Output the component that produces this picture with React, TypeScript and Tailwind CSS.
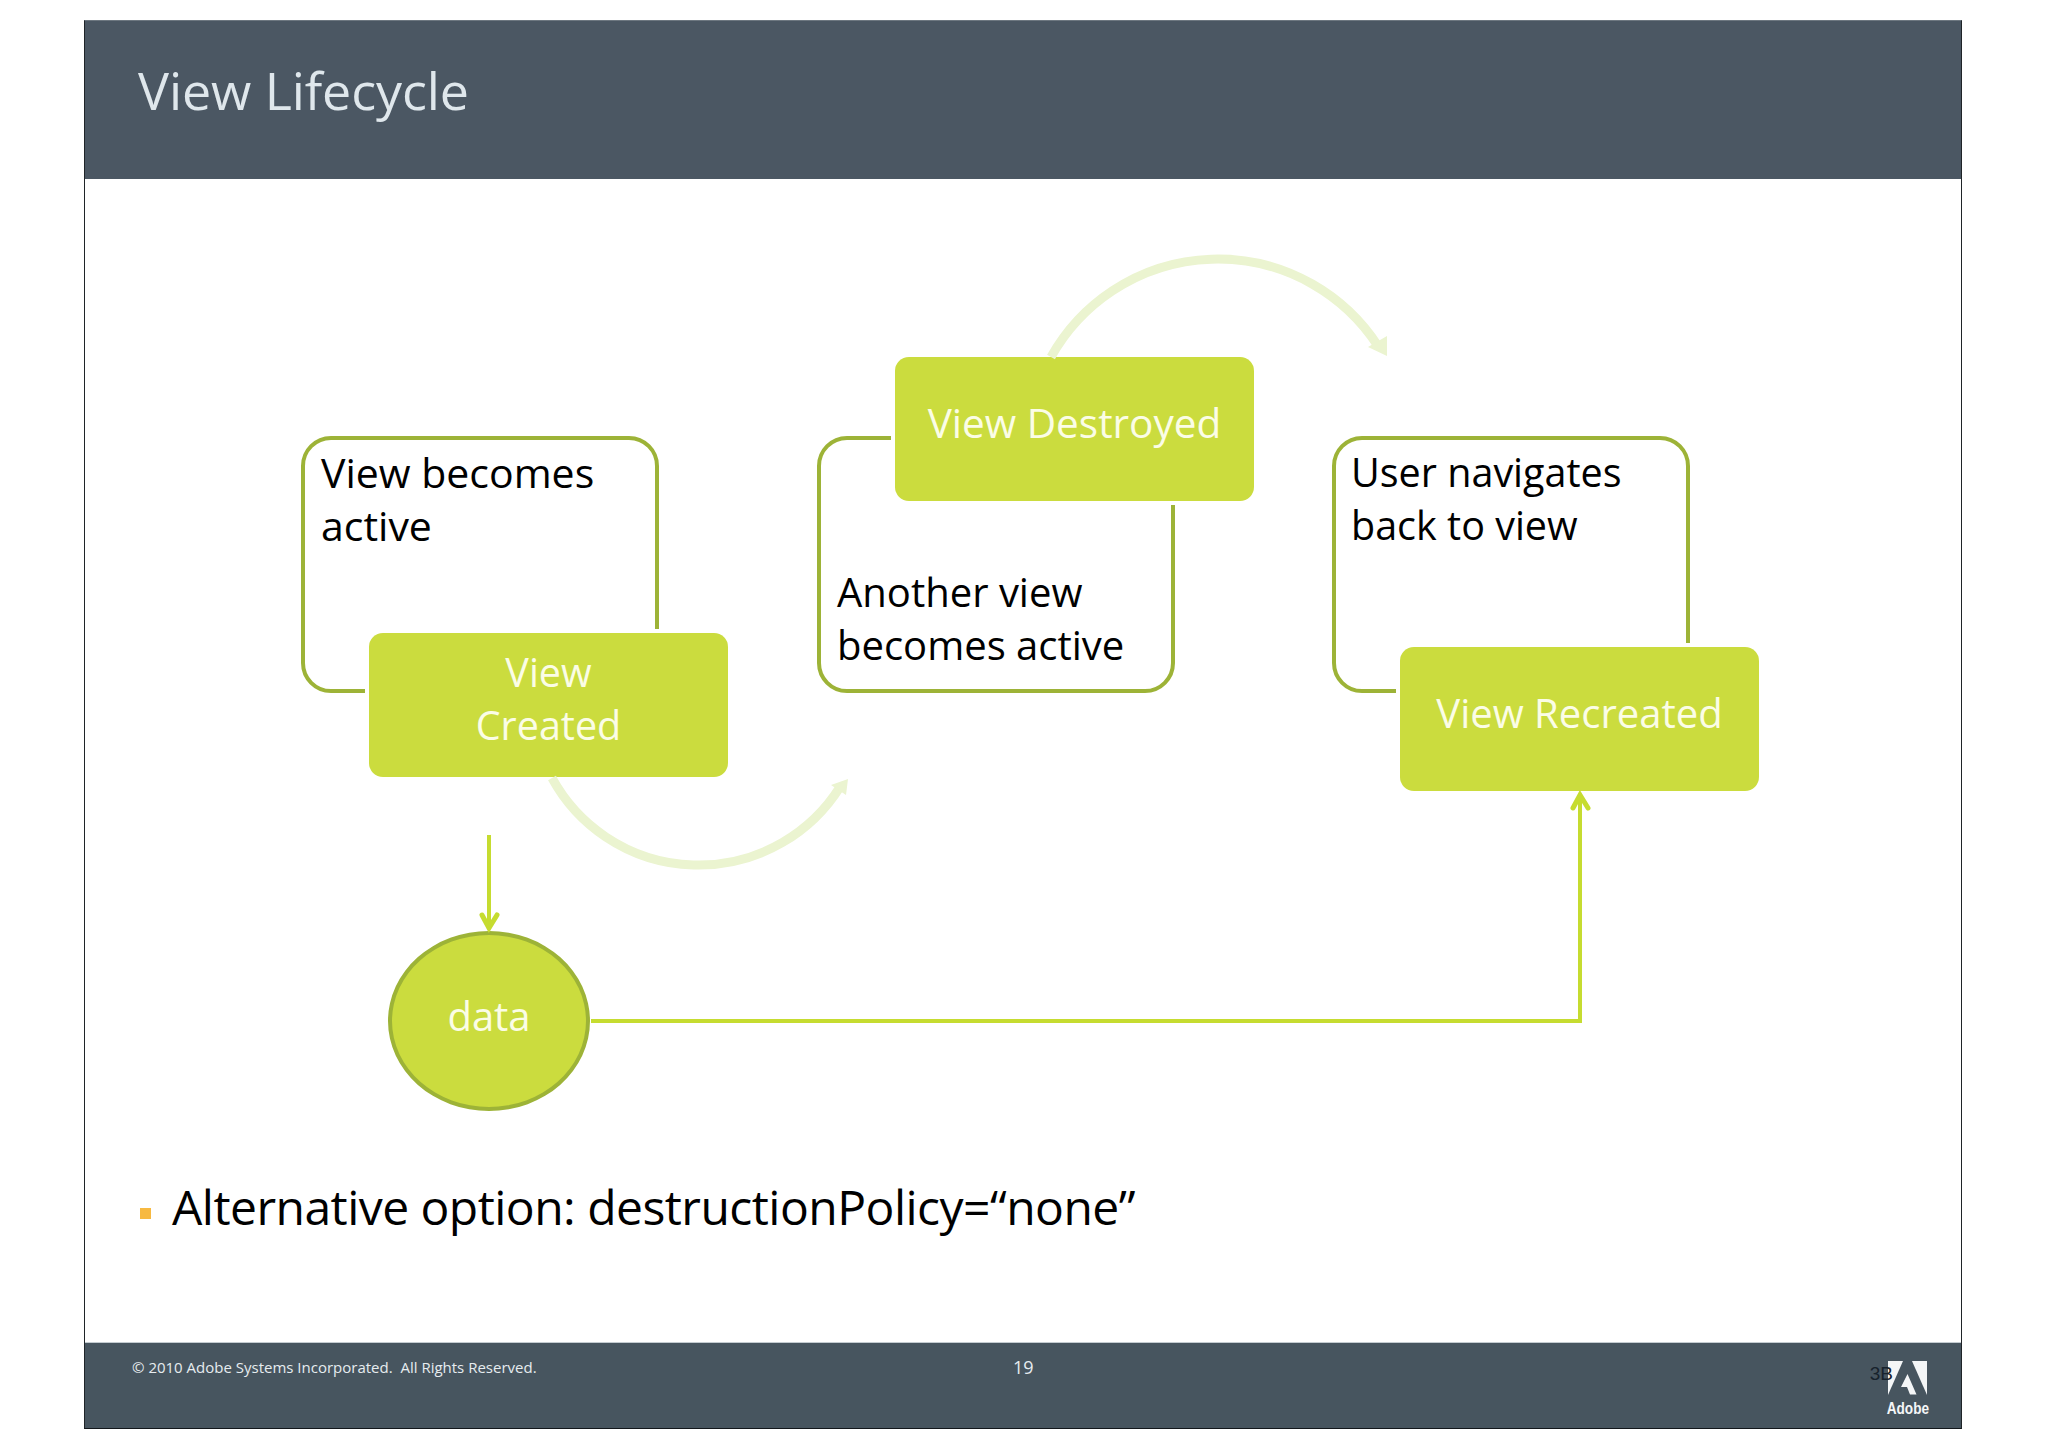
export default function App() {
  return (
    <div className="w-[2048px] h-[1448px] bg-white pl-[84px] pt-[20px] font-['Open_Sans',sans-serif]">
      <div className="w-[1878px] h-[1409px] flex flex-col border-l border-r border-b border-t border-l-[#1f2428] border-r-[#1f2428] border-b-[#12171b] border-t-[#6d7780]">
        <header className="h-[158px] shrink-0 bg-[#4b5763] pl-[53px] pt-[34px]">
          <h1 className="text-[52px] leading-[70px] text-[#dfe7ec] tracking-[-0.1px]">View Lifecycle</h1>
        </header>

        <main className="flex-1 flex flex-col bg-white">
          <div className="relative flex-1 leading-[53px]">
            <div className="absolute left-[216px] top-[257px] w-[358px] h-[257px] rounded-[30px] border-[4px] border-[#9db337] pl-[16px] pt-[6px] text-black text-[41px]">
              <p>View becomes</p>
              <p>active</p>
            </div>
            <div className="absolute left-[284px] top-[454px] w-[359px] h-[144px] rounded-[14px] bg-[#cbdc3e] ring-4 ring-white pt-[13px] text-center text-[#fbfde6] text-[39.5px]">
              <p>View</p>
              <p>Created</p>
            </div>

            <div className="absolute left-[732px] top-[257px] w-[358px] h-[257px] rounded-[30px] border-[4px] border-[#9db337] pl-[16px] pb-[18px] flex flex-col justify-end text-black text-[40px]">
              <p>Another view</p>
              <p>becomes active</p>
            </div>
            <div className="absolute left-[810px] top-[178px] w-[359px] h-[144px] rounded-[14px] bg-[#cbdc3e] ring-4 ring-white pt-[39px] text-center text-[#fbfde6] text-[40.5px]">
              <p>View Destroyed</p>
            </div>

            <div className="absolute left-[1247px] top-[257px] w-[358px] h-[257px] rounded-[30px] border-[4px] border-[#9db337] pl-[15px] pt-[6px] text-black text-[39.5px]">
              <p>User navigates</p>
              <p>back to view</p>
            </div>
            <div className="absolute left-[1315px] top-[468px] w-[359px] h-[144px] rounded-[14px] bg-[#cbdc3e] ring-4 ring-white pt-[39px] text-center text-[#fbfde6] text-[40px]">
              <p>View Recreated</p>
            </div>

            <div className="absolute left-[303px] top-[752px] w-[202px] h-[180px] rounded-[50%] border-[4px] border-[#9db337] bg-[#cbdc3e] flex items-center justify-center pb-[12px] text-[#fbfde6] text-[40px]">
              data
            </div>

            <svg className="absolute left-0 top-0 w-[1876px] h-[999px] pointer-events-none" viewBox="85 179 1876 999" fill="none">
              <path d="M552 778 A167 167 0 0 0 840 787" stroke="#ebf4d0" strokeWidth="9" />
              <path d="M848 779 L831 785 L846 795 Z" fill="#ebf4d0" />
              <path d="M1051 357 A191 191 0 0 1 1378 346" stroke="#ebf4d0" strokeWidth="9" />
              <path d="M1387 356 L1368 347 L1387 336 Z" fill="#ebf4d0" />
              <path d="M489 835 V927" stroke="#c6dc30" strokeWidth="4" />
              <path d="M482 915 L489 928 L497 915" stroke="#c6dc30" strokeWidth="5" strokeLinecap="round" />
              <path d="M591 1021 H1580 V796" stroke="#c6dc30" strokeWidth="4" />
              <path d="M1573 808 L1580 795 L1588 808" stroke="#c6dc30" strokeWidth="5" strokeLinecap="round" />
            </svg>
          </div>

          <div className="h-[164px] shrink-0 pl-[55px] flex items-start text-black">
            <span className="w-[11px] h-[11px] mt-[30px] bg-[#f7b941]" />
            <span className="ml-[21px] -mt-px text-[48px] leading-[60px] tracking-[-0.53px] whitespace-nowrap">Alternative option: destructionPolicy=“none”</span>
          </div>
        </main>

        <footer className="h-[86px] shrink-0 bg-[#47555f] pl-[47px] pr-[33px] flex items-start border-t border-t-[#c4ccd1]">
          <span className="w-[881px] mt-[14px] text-[15px] leading-[20px] text-[#e6ecef] whitespace-nowrap">© 2010 Adobe Systems Incorporated.&nbsp; All Rights Reserved.</span>
          <span className="mt-[14px] text-[18px] leading-[20px] text-[#e6ecef]">19</span>
          <div className="ml-auto flex items-start">
            <span className="relative z-10 mt-[19px] text-[19px] leading-[24px] text-[#17222c] font-['Liberation_Sans',sans-serif]">3B</span>
            <div className="ml-[-5px] mt-[18px] w-[40px] flex flex-col items-center">
              <svg width="40" height="34" viewBox="0 0 40 34" className="block">
                <path d="M0 0 H15 L0 34 Z" fill="#f4f6f7" />
                <path d="M24 0 H39 V34 Z" fill="#f4f6f7" />
                <path d="M19.5 13 L28.5 33.5 H22 L19 26 H13 Z" fill="#f4f6f7" />
              </svg>
              <span className="mt-[4px] text-[16px] leading-[20px] font-bold text-[#f4f6f7] scale-x-[0.85] font-['Liberation_Sans',sans-serif]">Adobe</span>
            </div>
          </div>
        </footer>
      </div>
    </div>
  );
}
